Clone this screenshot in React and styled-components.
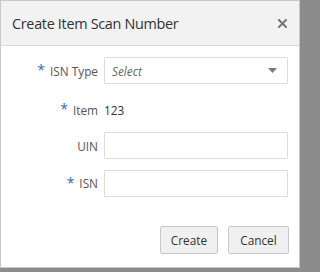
import React from "react";
import styled, { createGlobalStyle } from "styled-components";

const Global = createGlobalStyle`
  html, body { margin: 0; padding: 0; }
  body {
    width: 304px;
    height: 272px;
    overflow: hidden;
    background: #8c8c8c;
    font-family: "Open Sans", "Noto Sans", sans-serif;
  }
`;

const Dialog = styled.div`
  box-sizing: border-box;
  width: 300px;
  height: 268px;
  background: #ffffff;
  border: 1px solid #c9c9c9;
  display: flex;
  flex-direction: column;
`;

const Header = styled.div`
  box-sizing: border-box;
  height: 45px;
  flex: none;
  background: #f2f2f2;
  border-bottom: 1px solid #d9d9d9;
  display: flex;
  align-items: center;
  justify-content: space-between;
  padding: 0 12px 0 11px;
`;

const Title = styled.h1`
  margin: 0;
  font-size: 14.4px;
  font-weight: 400;
  letter-spacing: -0.3px;
  color: #333333;
`;

const CloseButton = styled.button`
  border: 0;
  background: transparent;
  padding: 0;
  width: 10px;
  height: 10px;
  display: flex;
  align-items: center;
  justify-content: center;
  cursor: pointer;
`;

const Body = styled.div`
  flex: 1;
  padding: 11px 11px 0 0;
`;

const Form = styled.div`
  display: grid;
  grid-template-columns: 97px 1fr;
  column-gap: 6px;
  row-gap: 10.5px;
  grid-auto-rows: 27px;
  align-items: center;
`;

const Label = styled.label`
  justify-self: end;
  font-size: 11.8px;
  color: #555555;
  display: flex;
  align-items: center;
  gap: 5px;
  padding-top: ${(p) => (p.$plain ? 3 : 0)}px;
`;

const Star = styled.span`
  color: #2e6fb7;
  font-size: 14px;
  position: relative;
  top: -1px;
`;

const Value = styled.div`
  font-size: 11.8px;
  color: #333333;
  padding-top: 3px;
`;

const Field = styled.div`
  box-sizing: border-box;
  height: 27px;
  border: 1px solid #dcdcdc;
  border-radius: 1px;
  background: #ffffff;
  display: flex;
  align-items: center;
  justify-content: space-between;
  padding: 0 10px 0 7px;
`;

const Placeholder = styled.span`
  font-size: 11.8px;
  font-style: italic;
  color: #666666;
`;

const Footer = styled.div`
  display: flex;
  justify-content: flex-end;
  gap: 10px;
  padding: 0 10px 13px 0;
`;

const Button = styled.button`
  box-sizing: border-box;
  height: 28px;
  width: ${(p) => p.w}px;
  padding: 0;
  border: 1px solid #c8c8c8;
  border-radius: 2px;
  background: #f0f0f0;
  color: #333333;
  font-family: "Open Sans", "Noto Sans", sans-serif;
  font-size: 11.8px;
`;

function Row({ label, required, plain, children }) {
  return (
    <>
      <Label $plain={plain}>
        {required && <Star>*</Star>}
        {label}
      </Label>
      {children}
    </>
  );
}

export default function App() {
  return (
    <>
      <Global />
      <Dialog>
        <Header>
          <Title>Create Item Scan Number</Title>
          <CloseButton aria-label="Close">
            <svg width="9" height="9" viewBox="0 0 9 9">
              <path d="M1 1 L8 8 M8 1 L1 8" stroke="#777777" strokeWidth="2" strokeLinecap="square" />
            </svg>
          </CloseButton>
        </Header>
        <Body>
          <Form>
            <Row label="ISN Type" required>
              <Field>
                <Placeholder>Select</Placeholder>
                <svg width="9" height="5" viewBox="0 0 9 5">
                  <path d="M0 0 H9 L4.5 5 Z" fill="#7a7a7a" />
                </svg>
              </Field>
            </Row>
            <Row label="Item" required plain>
              <Value>123</Value>
            </Row>
            <Row label="UIN">
              <Field />
            </Row>
            <Row label="ISN" required>
              <Field />
            </Row>
          </Form>
        </Body>
        <Footer>
          <Button w={58}>Create</Button>
          <Button w={61}>Cancel</Button>
        </Footer>
      </Dialog>
    </>
  );
}
